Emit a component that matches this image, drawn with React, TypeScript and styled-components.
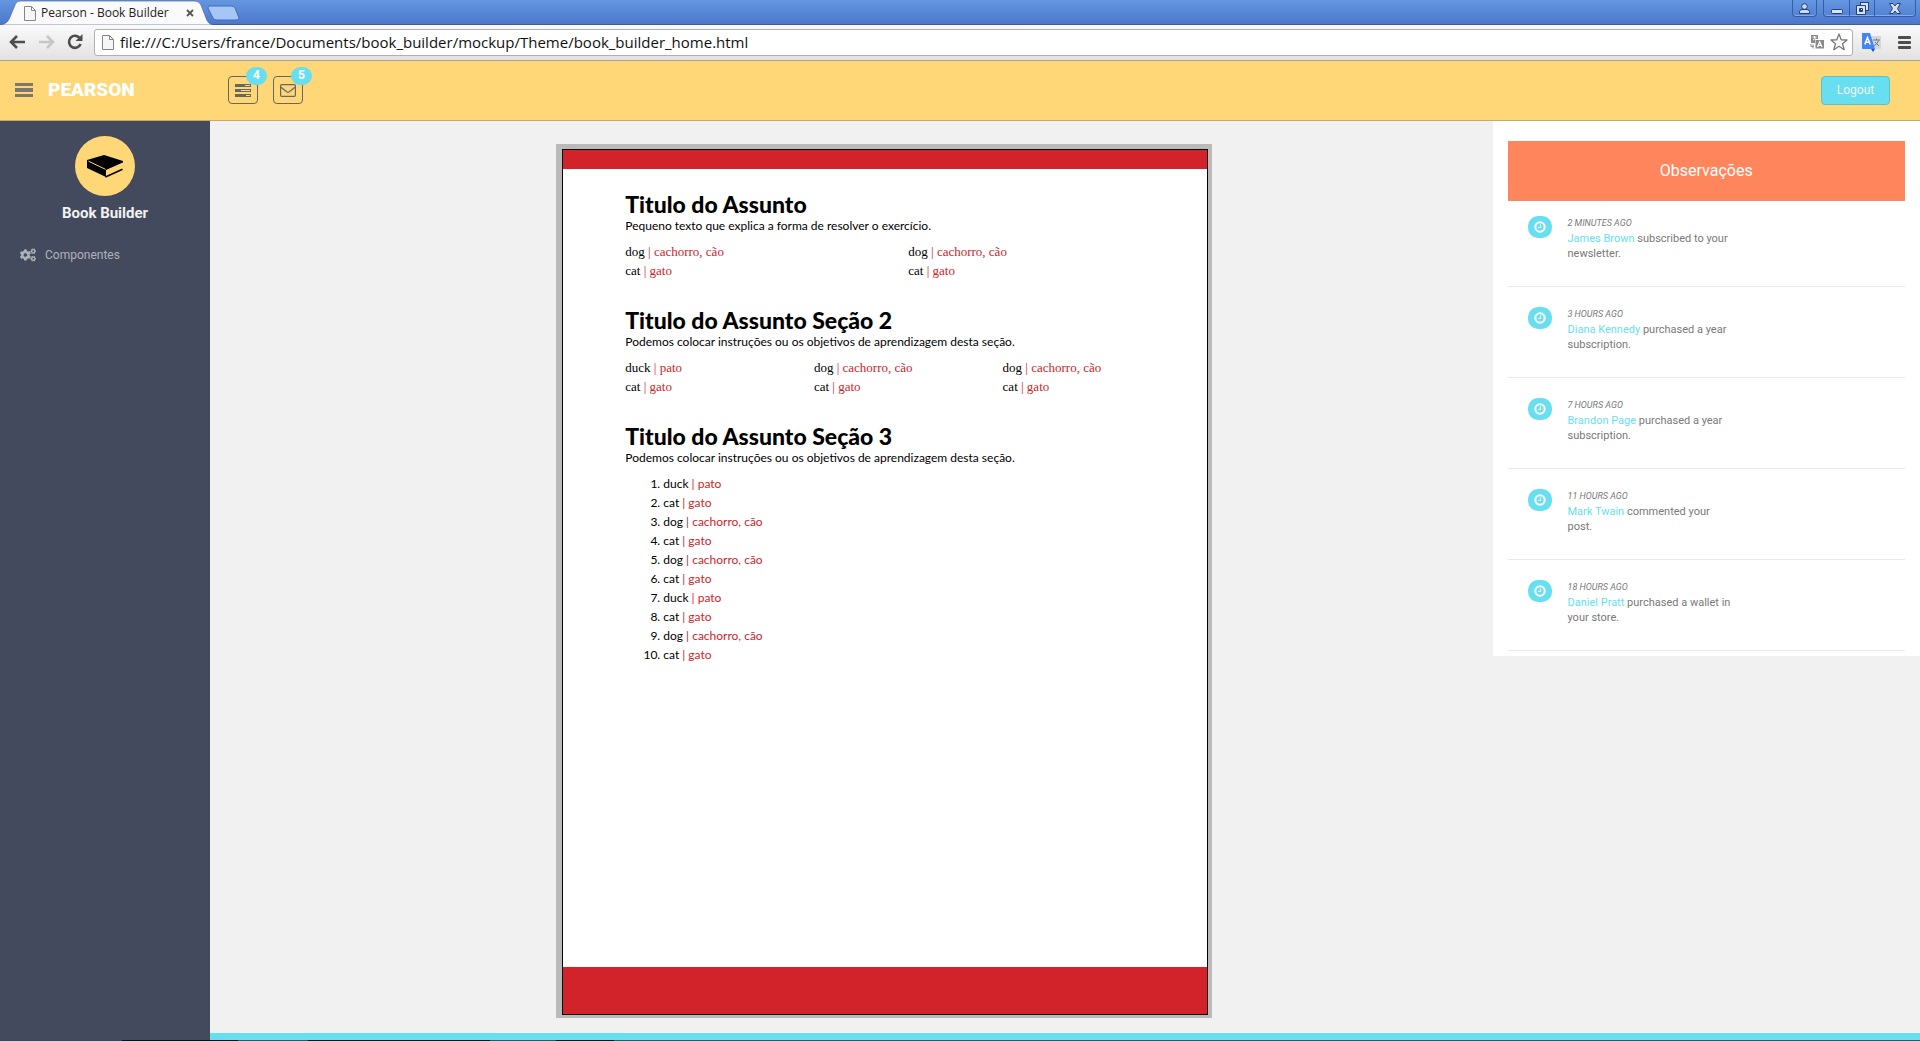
import React from 'react';
import styled, { createGlobalStyle } from 'styled-components';
import { FaCogs } from 'react-icons/fa';

const uiFont = "Roboto, 'Liberation Sans', sans-serif";
const chromeFont = "'Open Sans', 'Noto Sans', sans-serif";
const bookSans = "Lato, 'Liberation Sans', sans-serif";
const bookSerif = "'Liberation Serif', serif";
const cyan = '#68dff0';
const gold = '#ffd777';
const red = '#d2232a';

const GlobalStyle = createGlobalStyle`
  *, *::before, *::after { box-sizing: border-box; }
  body { margin: 0; background: #f1f1f1; font-family: ${uiFont}; }
  button { font: inherit; padding: 0; border: 0; background: none; }
  svg { display: block; }
`;

const Shell = styled.div`
  display: flex;
  flex-direction: column;
  min-height: 100vh;
`;

/* ---------- browser frame ---------- */

const TabStrip = styled.div`
  display: flex;
  justify-content: space-between;
  height: 25px;
  background: linear-gradient(#6596e0, #4c78cc);
  border-bottom: 1px solid #3c5c9c;
`;

const Tabs = styled.div`
  display: flex;
  height: 25px;
`;

const Tab = styled.div`
  position: relative;
  display: flex;
  align-items: center;
  width: 208px;
  padding: 1px 14px 0 24px;
  font: 12px/16px ${chromeFont};
  color: #222;
`;

const TabShape = styled.svg`
  position: absolute;
  left: 0;
  top: 0;
`;

const TabTitle = styled.span`
  position: relative;
  flex: 1;
  padding-left: 5px;
  white-space: nowrap;
`;

const TabIcon = styled.svg`
  position: relative;
`;

const WindowControls = styled.div`
  display: flex;
  align-items: flex-start;
  gap: 6px;
  padding-right: 4px;
`;

const ControlGroup = styled.div`
  display: flex;
  height: 17px;
  border: 1px solid #365ca5;
  border-top: 0;
  border-radius: 0 0 4px 4px;
  box-shadow: inset 0 -1px 0 #83aaea;
`;

const WindowButton = styled.button<{ $w: number }>`
  display: flex;
  justify-content: center;
  align-items: center;
  width: ${(p) => p.$w}px;
  height: 16px;
  & + & { border-left: 1px solid #365ca5; }
`;

const Toolbar = styled.div`
  display: flex;
  align-items: center;
  height: 36px;
  padding: 0 9px 1px;
  background: linear-gradient(#fafafa, #e2e2e2);
  border-bottom: 1px solid #a5a5a5;
`;

const NavButton = styled.button`
  display: flex;
  align-items: center;
  width: 29px;
  height: 28px;
`;

const Omnibox = styled.label`
  display: flex;
  flex: 1;
  align-items: center;
  gap: 6px;
  height: 27px;
  margin: 0 9px 0 -2px;
  padding: 0 4px 0 7px;
  background: #fff;
  border: 1px solid #b0b0b0;
  border-radius: 3px;
`;

const Address = styled.input`
  flex: 1;
  min-width: 0;
  height: 22px;
  padding: 0;
  border: 0;
  outline: 0;
  background: none;
  color: #111;
  font: 15px/22px ${chromeFont};
`;

const IconButton = styled.button<{ $gap?: number }>`
  display: flex;
  margin-right: ${(p) => p.$gap ?? 0}px;
`;

/* ---------- application header ---------- */

const Header = styled.header`
  display: flex;
  align-items: center;
  height: 60px;
  padding: 0 30px 1px 15px;
  background: ${gold};
  border-bottom: 1px solid #c9aa5f;
`;

const Brand = styled.a`
  width: 195px;
  padding-left: 15px;
  color: #fff;
  font-size: 19px;
  font-weight: 900;
  line-height: 24px;
  text-decoration: none;
`;

const Shortcuts = styled.nav`
  display: flex;
  flex: 1;
  gap: 15px;
`;

const Shortcut = styled.a`
  position: relative;
  display: flex;
  justify-content: center;
  align-items: center;
  width: 30px;
  height: 28px;
  border: 1px solid #666;
  border-radius: 4px;
`;

const Count = styled.span`
  position: absolute;
  top: -10px;
  right: -10px;
  width: 21px;
  height: 18px;
  border-radius: 9px;
  background: ${cyan};
  color: #fff;
  font-size: 12px;
  font-weight: 700;
  line-height: 16px;
  text-align: center;
`;

const Logout = styled.button`
  width: 69px;
  height: 29px;
  border: 1px solid #5cc4c8;
  border-radius: 4px;
  background: ${cyan};
  color: #f2f2f2;
  font-size: 12px;
`;

/* ---------- body ---------- */

const Body = styled.div`
  display: flex;
  flex: 1;
`;

const Sidebar = styled.aside`
  width: 210px;
  padding-top: 15px;
  background: #444a5d;
  color: #f2f2f2;
`;

const Avatar = styled.div`
  display: flex;
  justify-content: center;
  align-items: center;
  width: 60px;
  height: 60px;
  margin: 0 auto;
  border-radius: 50%;
  background: ${gold};
`;

const ProductName = styled.h5`
  margin: 8px 0 24px;
  font-size: 15px;
  font-weight: 700;
  line-height: 18px;
  text-align: center;
`;

const MenuLink = styled.a`
  display: flex;
  align-items: center;
  gap: 9px;
  padding-left: 20px;
  color: #aeb2b7;
  font-size: 12px;
  line-height: 18px;
  text-decoration: none;
`;

const Main = styled.main`
  display: flex;
  flex: 1;
  flex-direction: column;
`;

const Columns = styled.div`
  display: grid;
  grid-template-columns: 3fr 1fr;
  flex: 1;
`;

const Workspace = styled.div`
  display: flex;
  padding: 23px 0 15px 27%;
`;

const Frame = styled.div`
  display: flex;
  width: 656px;
  padding: 5px 4px 3px 6px;
  background: #bababa;
`;

const Sheet = styled.article`
  display: flex;
  flex: 1;
  flex-direction: column;
  border: 1px solid #000;
  background: #fff;
  color: #000;
`;

const Band = styled.div<{ $h: number }>`
  height: ${(p) => p.$h}px;
  background: ${red};
`;

const SheetContent = styled.div`
  flex: 1;
  padding: 23px 16px 0 62px;
`;

const Section = styled.section`
  margin-bottom: 28px;
`;

const Title = styled.h2`
  margin: 0;
  font: 900 23px/24px ${bookSans};
`;

const Intro = styled.p`
  margin: 0 0 6px;
  font: 12px/20px ${bookSans};
`;

const WordGrid = styled.div<{ $cols: number }>`
  display: grid;
  grid-template-columns: repeat(${(p) => p.$cols}, 1fr);
  font: 13px/19px ${bookSerif};
`;

const WordList = styled.ol`
  margin: 0;
  padding-left: 38px;
  font: 12px/19px ${bookSans};
`;

const Answer = styled.span`
  color: ${red};
`;

const Notes = styled.aside`
  align-self: start;
  padding: 20px 15px 0;
  background: #fff;
`;

const NotesTitle = styled.h3`
  margin: 0;
  background: #ff865c;
  color: #fff;
  font-size: 16px;
  font-weight: 400;
  line-height: 60px;
  text-align: center;
`;

const Note = styled.div`
  display: flex;
  gap: 16px;
  height: 86px;
  margin-bottom: 5px;
  padding: 15px 20px 0;
  border-bottom: 1px solid #e9e9e9;
`;

const Clock = styled.span`
  display: flex;
  justify-content: center;
  align-items: center;
  width: 24px;
  height: 22px;
  border-radius: 10px;
  background: ${cyan};
`;

const NoteText = styled.p`
  width: 166px;
  margin: 0;
  color: #797979;
  font-size: 11px;
  line-height: 15px;
`;

const Time = styled.em`
  display: block;
  font-size: 9px;
  text-transform: uppercase;
`;

const Person = styled.a`
  color: ${cyan};
  text-decoration: none;
`;

const Footer = styled.footer`
  height: 7px;
  background: ${cyan};
`;

const Taskbar = styled.div`
  height: 1px;
  background: linear-gradient(90deg, #3d4658 122px, #0c0f14 122px 238px, #3f5060 238px 308px, #0c0f14 308px 490px, #3f5060 490px 556px, #0c0f14 556px 614px, #3f5060 614px);
`;

type Entry = [string, string];
const dog: Entry = ['dog', 'cachorro, cão'];
const cat: Entry = ['cat', 'gato'];
const duck: Entry = ['duck', 'pato'];

const sectionOne = [dog, dog, cat, cat];
const sectionTwo = [duck, dog, dog, cat, cat, cat];
const sectionThree = [duck, cat, dog, cat, dog, cat, duck, cat, dog, cat];

const notes = [
  ['2 Minutes Ago', 'James Brown', 'subscribed to your newsletter.'],
  ['3 Hours Ago', 'Diana Kennedy', 'purchased a year subscription.'],
  ['7 Hours Ago', 'Brandon Page', 'purchased a year subscription.'],
  ['11 Hours Ago', 'Mark Twain', 'commented your post.'],
  ['18 Hours Ago', 'Daniel Pratt', 'purchased a wallet in your store.'],
];

const Word = ({ entry }: { entry: Entry }) => (
  <>
    {entry[0]} <Answer>| {entry[1]}</Answer>
  </>
);

const PageGlyph = () => (
  <TabIcon width="12" height="15" viewBox="0 0 12 15" fill="#f6f6f6" stroke="#858585">
    <path d="M.5 .5H7.5L11.500 4.500V14.500H.5Z" />
    <path d="M7.500 .5V4.500H11.500" fill="none" />
  </TabIcon>
);

function Browser() {
  return (
    <>
      <TabStrip>
        <Tabs>
          <Tab>
            <TabShape width="242" height="25" viewBox="0 0 242 25">
              <path d="M0 25C6 24 8 22 10 17L15 5Q16 1 20 1H195Q199 1 201 5L206 18Q208 24 213 25Z" fill="#fafafa" stroke="#46689f" strokeWidth=".7" />
              <path d="M210 6H231Q234 6 235 8L239 18Q239 20 236 20H217Q214 20 213 18L208 8Q208 6 210 6Z" fill="#a6c6f5" stroke="#456db5" />
            </TabShape>
            <PageGlyph />
            <TabTitle>Pearson - Book Builder</TabTitle>
            <TabIcon width="8" height="8" viewBox="0 0 8 8" stroke="#555" strokeWidth="1.800">
              <path d="M1 1L7 7M7 1L1 7" />
            </TabIcon>
          </Tab>
        </Tabs>
        <WindowControls>
          <ControlGroup>
            <WindowButton $w={23} aria-label="Profile">
              <svg width="11" height="11" viewBox="0 0 11 11" fill="#c9dafa" stroke="#253f78">
                <path d="M.5 10.500V8.500Q.5 7 3 6.500H8Q10.500 7 10.500 8.500V10.500Z" />
                <circle cx="5.500" cy="3.500" r="2.800" />
              </svg>
            </WindowButton>
          </ControlGroup>
          <ControlGroup>
            <WindowButton $w={25} aria-label="Minimize">
              <svg width="12" height="12" viewBox="0 0 12 12"><rect x=".5" y="7.500" width="11" height="4" rx="1" fill="#d5e2fa" stroke="#253f78" /></svg>
            </WindowButton>
            <WindowButton $w={25} aria-label="Restore">
              <svg width="13" height="13" viewBox="0 0 13 13" fill="#d5e2fa" stroke="#253f78">
                <rect x="4.500" y=".5" width="8" height="8" />
                <path d="M.5 3.500H9.500V12.500H.5ZM3.500 6.500V9.500H6.500V6.500Z" fillRule="evenodd" />
              </svg>
            </WindowButton>
            <WindowButton $w={41} aria-label="Close window">
              <svg width="12" height="11" viewBox="0 0 12 11" fill="#d5e2fa" stroke="#253f78">
                <path d="M.5 .5H4L6 3L8 .5H11.500L8.500 5.500L11.500 10.500H8L6 8L4 10.500H.5L3.500 5.500Z" />
              </svg>
            </WindowButton>
          </ControlGroup>
        </WindowControls>
      </TabStrip>
      <Toolbar>
        <NavButton aria-label="Back">
          <svg width="17" height="14" viewBox="0 0 17 14" fill="none" stroke="#4d4d4d" strokeWidth="2.600"><path d="M16 7H3M8 1L2 7L8 13" /></svg>
        </NavButton>
        <NavButton aria-label="Forward">
          <svg width="17" height="14" viewBox="0 0 17 14" fill="none" stroke="#c6c6c6" strokeWidth="2.600"><path d="M1 7H14M9 1L15 7L9 13" /></svg>
        </NavButton>
        <NavButton aria-label="Reload">
          <svg width="16" height="16" viewBox="0 0 16 16"><path d="M13 4.500A6 6 0 1 0 13.600 10" fill="none" stroke="#4d4d4d" strokeWidth="2.600" /><path d="M15.500 0V7H8.500Z" fill="#4d4d4d" /></svg>
        </NavButton>
        <Omnibox>
          <PageGlyph />
          <Address aria-label="Address" defaultValue="file:///C:/Users/france/Documents/book_builder/mockup/Theme/book_builder_home.html" />
          <IconButton type="button" aria-label="Translate this page">
            <svg width="14" height="14" viewBox="0 0 14 14">
              <path d="M1 0H8V4H5V8H1Z" fill="#8a8a8a" />
              <path d="M2.500 2H6.500M4.500 1V3M3 5L6 2.500" stroke="#fff" fill="none" />
              <rect x="5.500" y="5" width="8.500" height="8.500" fill="#8a8a8a" />
              <path d="M7.500 12L9.700 6.800L12 12M8.300 10.300H11.200" stroke="#fff" strokeWidth="1.200" fill="none" />
              <path d="M1 9V11.500H3.500M3 9.500V13.500" stroke="#8a8a8a" fill="none" />
            </svg>
          </IconButton>
          <IconButton type="button" aria-label="Bookmark">
            <svg width="18" height="18" viewBox="0 0 18 18" fill="#fff" stroke="#777" strokeWidth="1.300" strokeLinejoin="round">
              <path d="M9 1L11.200 6.800L17 7L12.500 10.700L14.200 16.700L9 13.300L3.800 16.700L5.500 10.700L1 7L6.800 6.800Z" />
            </svg>
          </IconButton>
        </Omnibox>
        <IconButton aria-label="Google Translate" $gap={17}>
          <svg width="19" height="19" viewBox="0 0 19 19">
            <rect x="8" y="3" width="11" height="13" fill="#d7d7d7" />
            <path d="M11 7H18M14.500 5.500V7M16.500 7.500Q15.500 11 12 13M13 9L17 13" stroke="#5f7f90" fill="none" />
            <path d="M0 0H8L13 16H1Q0 16 0 15Z" fill="#4385f4" />
            <path d="M9 16H13L11 19Z" fill="#2b50bd" />
            <path d="M2.800 11.500L5.500 4.500L8.200 11.500M3.700 9.300H7.300" stroke="#fff" strokeWidth="1.500" fill="none" />
          </svg>
        </IconButton>
        <IconButton aria-label="Menu">
          <svg width="13" height="13" viewBox="0 0 13 13" fill="#4d4d4d"><rect width="13" height="3" rx="1" /><rect y="5" width="13" height="3" rx="1" /><rect y="10" width="13" height="3" rx="1" /></svg>
        </IconButton>
      </Toolbar>
    </>
  );
}

export default function App() {
  return (
    <Shell>
      <GlobalStyle />
      <Browser />
      <Header>
        <IconButton aria-label="Toggle navigation">
          <svg width="18" height="14" viewBox="0 0 18 14" fill="#7d7770"><rect width="18" height="3" /><rect y="5" width="18" height="4" /><rect y="11" width="18" height="3" /></svg>
        </IconButton>
        <Brand href="#home">PEARSON</Brand>
        <Shortcuts>
          <Shortcut href="#tasks" aria-label="Tasks">
            <svg width="16" height="13" viewBox="0 0 16 13">
              <path d="M0 0H16V3H0ZM0 5H16V8H0ZM0 10H16V13H0Z" fill="#666" />
              <path d="M10 1H15V2H10ZM6 6H15V7H6ZM11 11H15V12H11Z" fill={gold} />
            </svg>
            <Count>4</Count>
          </Shortcut>
          <Shortcut href="#messages" aria-label="Messages">
            <svg width="16" height="13" viewBox="0 0 16 13" fill="none" stroke="#666" strokeWidth="1.200"><rect x=".6" y=".6" width="14.800" height="11.800" rx="1.200" /><path d="M1 3.200L7 8Q8 8.700 9 8L15 3.200" /></svg>
            <Count>5</Count>
          </Shortcut>
        </Shortcuts>
        <Logout>Logout</Logout>
      </Header>
      <Body>
        <Sidebar>
          <Avatar>
            <svg width="38" height="24" viewBox="0 0 38 24">
              <path d="M1 6L18 1L37 7V8.500L20 16V23L1 14Z" fill="#000" />
              <path d="M2.500 7.200L19.500 15.300" stroke={gold} strokeWidth="1" />
              <path d="M21 16L37 8.800V14.500L21 22Z" fill={gold} />
              <path d="M19.500 23L36.500 15.300" stroke="#000" strokeWidth="1.500" />
            </svg>
          </Avatar>
          <ProductName>Book Builder</ProductName>
          <MenuLink href="#components"><FaCogs size={16} />Componentes</MenuLink>
        </Sidebar>
        <Main>
          <Columns>
            <Workspace>
              <Frame>
                <Sheet>
                  <Band $h={19} />
                  <SheetContent>
                    <Section>
                      <Title>Titulo do Assunto</Title>
                      <Intro>Pequeno texto que explica a forma de resolver o exercício.</Intro>
                      <WordGrid $cols={2}>
                        {sectionOne.map((e, i) => <span key={i}><Word entry={e} /></span>)}
                      </WordGrid>
                    </Section>
                    <Section>
                      <Title>Titulo do Assunto Seção 2</Title>
                      <Intro>Podemos colocar instruções ou os objetivos de aprendizagem desta seção.</Intro>
                      <WordGrid $cols={3}>
                        {sectionTwo.map((e, i) => <span key={i}><Word entry={e} /></span>)}
                      </WordGrid>
                    </Section>
                    <Section>
                      <Title>Titulo do Assunto Seção 3</Title>
                      <Intro>Podemos colocar instruções ou os objetivos de aprendizagem desta seção.</Intro>
                      <WordList>
                        {sectionThree.map((e, i) => <li key={i}><Word entry={e} /></li>)}
                      </WordList>
                    </Section>
                  </SheetContent>
                  <Band $h={47} />
                </Sheet>
              </Frame>
            </Workspace>
            <Notes>
              <NotesTitle>Observações</NotesTitle>
              {notes.map(([time, who, what]) => (
                <Note key={time}>
                  <Clock>
                    <svg width="12" height="12" viewBox="0 0 12 12" fill="none" stroke="#fff"><circle cx="6" cy="6" r="4.700" strokeWidth="2" /><path d="M6.500 3.500V6.500H4" strokeWidth="1.200" /></svg>
                  </Clock>
                  <NoteText><Time>{time}</Time><Person href="#member">{who}</Person> {what}</NoteText>
                </Note>
              ))}
            </Notes>
          </Columns>
          <Footer />
        </Main>
      </Body>
      <Taskbar />
    </Shell>
  );
}
